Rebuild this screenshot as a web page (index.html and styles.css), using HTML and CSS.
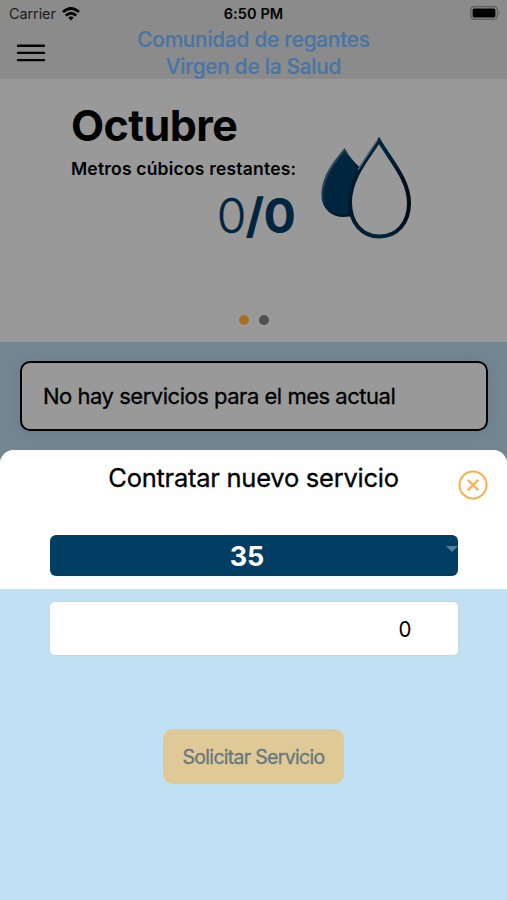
FILE: index.html
```html
<!DOCTYPE html>
<html lang="es">
<head>
<meta charset="utf-8">
<title>Comunidad de regantes</title>
<link rel="stylesheet" href="styles.css">
</head>
<body>
<div class="app">
  <header class="header">
    <div class="status">
      <div class="carrier"><span class="carrier-name">Carrier</span>
        <svg width="18" height="14" viewBox="0 0 18 14" fill="none" stroke="#000" stroke-width="2.7"><path d="M1 5Q9-2 17 5M3.800 8.500Q9 4 14.200 8.500"/><path d="M6.300 10.500Q9 8.300 11.700 10.500L9 13.500Z" fill="#000" stroke="none"/></svg>
      </div>
      <span class="time">6:50 PM</span>
      <svg class="battery" width="31" height="14" viewBox="0 0 31 14"><rect x=".7" y=".7" width="26.600" height="12.600" rx="3.500" fill="none" stroke="#5c5c5c" stroke-width="1.200"/><rect x="2.600" y="2.500" width="22.800" height="9" rx="1.600"/><path d="M28.700 4.800Q31 7 28.700 9.200Z" fill="#5c5c5c"/></svg>
    </div>
    <div class="nav">
      <svg class="menu" width="30" height="20" viewBox="0 0 30 20" stroke="#000" stroke-width="2.400" stroke-linecap="round"><path d="M2 2.700H28M2 9.900H28M2 17.100H28"/></svg>
      <h1 class="title">Comunidad de regantes<br>Virgen de la Salud</h1>
    </div>
  </header>
  <section class="summary">
    <div class="slide">
      <div class="figures">
        <h2 class="month">Octubre</h2>
        <p class="label">Metros cúbicos restantes:</p>
        <p class="amount"><span class="used">0</span><span>/0</span></p>
      </div>
      <svg class="drops" width="96" height="108" viewBox="0 0 96 108">
        <defs>
          <linearGradient id="edge" x1="0" y1="0" x2="1" y2="1"><stop offset="0" stop-color="#65717a"/><stop offset=".45" stop-color="#00263f"/><stop offset="1" stop-color="#000b16"/></linearGradient>
          <linearGradient id="rim" x1="0" y1="0" x2="1" y2="0"><stop offset="0" stop-color="#001a2e"/><stop offset=".6" stop-color="#00263f"/><stop offset="1" stop-color="#000b16"/></linearGradient>
        </defs>
        <path d="M26.500 14C18 24 5 39 4.500 57C4 73 15 82 31 79.500L40 31Q32 24 26.500 14Z" fill="#00263f" stroke="url(#edge)" stroke-width="2.200"/>
        <path d="M61 4.500C50 22 32 42 32 66C32 87 44 100.500 61.500 100.500C79 100.500 91 87 91 67C91 44 73 25 61 4.500Z" fill="#999" stroke="url(#rim)" stroke-width="4"/>
        <path d="M60 3C54 13 47 22 40 34" fill="none" stroke="#65717a" stroke-width="1.200"/>
      </svg>
    </div>
    <div class="dots"><i class="dot active"></i><i class="dot"></i></div>
  </section>
  <section class="services"><div class="notice"><span>No hay servicios para el mes actual</span></div></section>
  <main class="sheet">
    <div class="sheet-top">
      <div class="sheet-head"><h2 class="sheet-title">Contratar nuevo servicio</h2>
        <svg class="close" width="30" height="30" viewBox="0 0 30 30" fill="none" stroke="#f9b04b" stroke-width="2"><circle cx="15" cy="15" r="13.500"/><path d="M9.800 9.800L20.200 20.200M20.200 9.800L9.800 20.200" stroke-width="2.300"/></svg>
      </div>
      <div class="select"><span class="select-value">35</span><i class="arrow"></i></div>
    </div>
    <div class="sheet-body">
      <div class="field"><span class="field-value">0</span></div>
      <div class="submit"><span>Solicitar Servicio</span></div>
    </div>
  </main>
</div>
</body>
</html>
```
FILE: styles.css
```css
* { box-sizing: border-box; margin: 0; padding: 0; }
body { font-family: Inter, "Liberation Sans", sans-serif; color: #000; background: #738692; }
.app { width: 507px; height: 900px; overflow: hidden; display: flex; flex-direction: column; white-space: nowrap; }
.header { height: 79px; background: #8b8b8b; flex: none; }
.status { height: 27px; display: grid; grid-template-columns: 1fr auto 1fr; align-items: center; padding: 0 6px 0 9px; }
.carrier { display: flex; align-items: center; gap: 6px; font-size: 14.500px; letter-spacing: -.1px; color: #1c1c1c; }
.time { font-size: 14.500px; font-weight: 600; letter-spacing: .1px; margin-right: 3px; }
.battery { justify-self: end; margin-top: -1px; }
.nav { height: 52px; display: grid; grid-template-columns: 76px 1fr 76px; }
.menu { margin: 16px 0 0 16px; }
.title { font-size: 20.800px; line-height: 27px; font-weight: 500; letter-spacing: -.25px; text-align: center; color: #4975a6; margin-top: -1px; -webkit-text-stroke: .2px #4975a6; }
.summary { height: 263px; background: #999; flex: none; display: flex; flex-direction: column; }
.slide { display: flex; padding-left: 71px; height: 235px; }
.figures { width: 225px; padding-top: 20px; }
.month { font-size: 43px; line-height: 52px; font-weight: 700; letter-spacing: -.55px; }
.label { font-size: 17.500px; line-height: 22px; font-weight: 600; letter-spacing: .2px; margin-top: 7px; }
.amount { font-size: 48px; line-height: 58px; font-weight: 700; color: #00263f; margin-top: 7px; letter-spacing: -.8px; display: flex; justify-content: flex-end; padding-right: 1px; }
.used { font-weight: 300; -webkit-text-stroke: .3px #00263f; }
.drops { margin: 57px 0 0 22px; }
.dots { display: flex; gap: 10px; justify-content: center; margin-top: 1px; }
.dot { width: 10px; height: 10px; border-radius: 50%; background: #515151; }
.dot.active { background: #a87020; }
.services { height: 108px; flex: none; padding: 19px 19px 0 20px; background: #738692; }
.notice { height: 70px; border: 2px solid #000; border-radius: 10px; background: #999; display: flex; align-items: center; padding-left: 21px; font-size: 22px; letter-spacing: -.48px; -webkit-text-stroke: .3px #000; box-shadow: 0 2px 12px #58697560; }
.sheet { flex: 1; border-radius: 14px 14px 0 0; overflow: hidden; background: #c0e1f4; }
.sheet-top { height: 139px; background: #fff; }
.sheet-head { height: 85px; display: grid; grid-template-columns: 76px 1fr 76px; }
.sheet-title { grid-column: 2; font-size: 25.500px; font-weight: 400; letter-spacing: -.25px; -webkit-text-stroke: .3px #000; line-height: 30px; text-align: center; margin-top: 13px; }
.close { margin: 20px 0 0 27px; }
.select { height: 41px; margin: 0 49px 0 50px; background: #003e63; color: #fff; border-radius: 6px; display: grid; grid-template-columns: 1fr auto 1fr; align-items: center; }
.select-value { grid-column: 2; font-size: 27px; font-weight: 700; margin-right: 14px; padding-top: 1px; }
.arrow { justify-self: end; align-self: start; margin-top: 11px; border: 6px solid transparent; border-top-color: #577f98; border-bottom: 0; }
.sheet-body { padding: 12px 48px 0 49px; }
.field { height: 55px; background: #fff; border: 1px solid #d0d3d4; border-radius: 6px; display: flex; align-items: center; justify-content: flex-end; padding-right: 46px; font-size: 22px; }
.field-value { transform: scaleX(.93); }
.submit { width: 181px; height: 55px; margin: 73px 0 0 114px; border-radius: 10px; background: #dfc996; color: #67777c; display: flex; align-items: center; justify-content: center; font-size: 19.500px; letter-spacing: -.7px; -webkit-text-stroke: .3px #67777c; }
```
